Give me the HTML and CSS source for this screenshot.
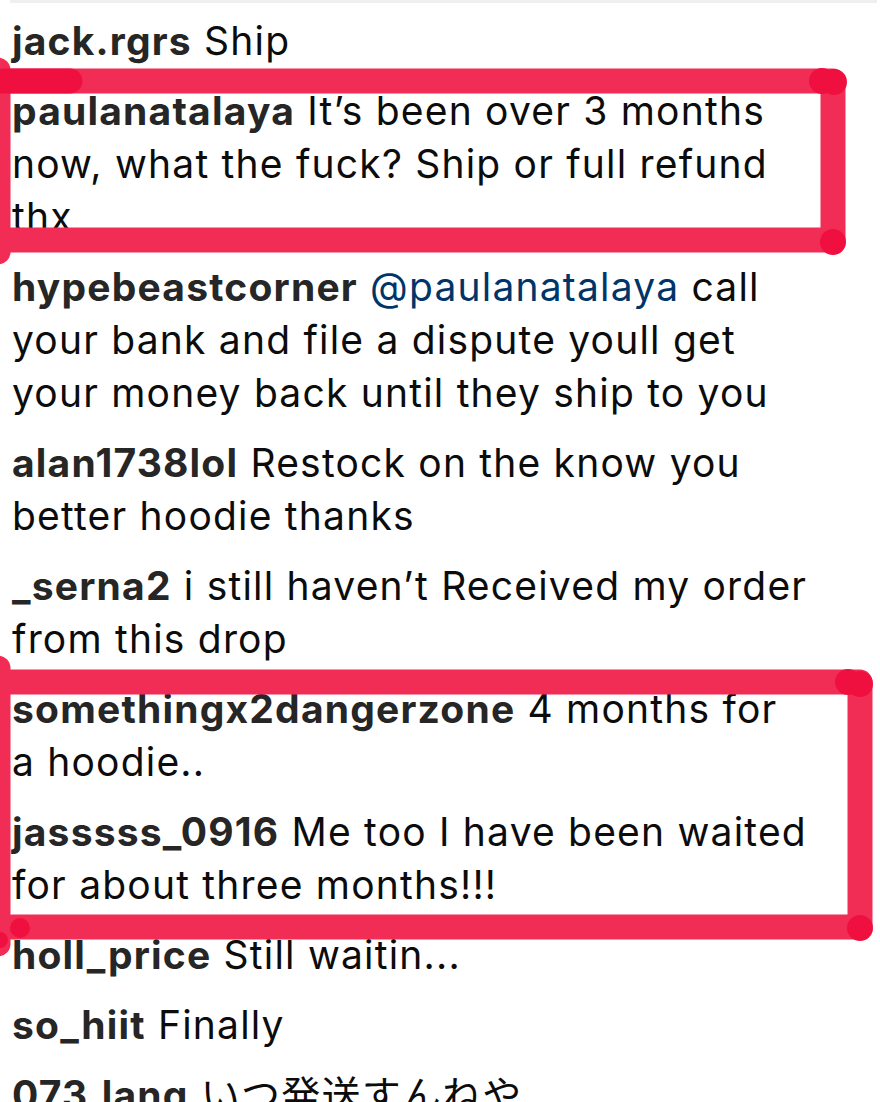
FILE: index.html
```html
<!DOCTYPE html>
<html lang="en">
<head>
    <meta charset="UTF-8">
    <meta name="viewport" content="width=device-width, initial-scale=1.0">
    <title>Comments</title>
    <link rel="stylesheet" href="styles.css">
</head>
<body>
    <div class="comments">
        <ul class="comment-list">
            <li class="comment"><span class="user">jack.rgrs</span> Ship</li>
            <li class="comment"><span class="user">paulanatalaya</span> It’s been over 3 months now, what the fuck? Ship or full refund thx</li>
            <li class="comment"><span class="user">hypebeastcorner</span> <a class="mention">@paulanatalaya</a> call your bank and file a dispute youll get your money back until they ship to you</li>
            <li class="comment"><span class="user">alan1738lol</span> Restock on the know you better hoodie thanks</li>
            <li class="comment"><span class="user">_serna2</span> i still haven’t Received my order from this drop</li>
            <li class="comment"><span class="user">somethingx2dangerzone</span> 4 months for a hoodie..</li>
            <li class="comment"><span class="user">jasssss_0916</span> Me too I have been waited for about three months!!!</li>
            <li class="comment"><span class="user">holl_price</span> Still waitin...</li>
            <li class="comment"><span class="user">so_hiit</span> Finally</li>
            <li class="comment"><span class="user">073.lang</span> いつ発送すんねや</li>
        </ul>

        <!-- marker annotations drawn over the list -->
        <svg class="marks" width="880" height="1102" viewBox="0 0 880 1102">
            <g class="stroke">
                <path d="M4 81 H833 V240 H0"/>
                <path d="M-2 70 V252"/>
                <path d="M4 682 H860 V927 H12"/>
                <path d="M-2 668 V944"/>
            </g>
            <g class="cap">
                <path d="M4 81 H70"/>
                <circle cx="822" cy="81" r="13"/>
                <circle cx="834" cy="82" r="13"/>
                <circle cx="833" cy="242" r="13"/>
                <circle cx="848" cy="682" r="13"/>
                <circle cx="860" cy="684" r="13"/>
                <circle cx="860" cy="928" r="13"/>
                <circle cx="20" cy="928" r="10"/>
                <circle cx="0" cy="940" r="8"/>
            </g>
        </svg>
    </div>
</body>
</html>
```

FILE: styles.css
```css
body {
    margin: 0;
    background-color: #fff;
    font-family: Inter, 'Noto Sans CJK JP', sans-serif;
    overflow: hidden;
}

.comments {
    position: relative;
    width: 880px;
    height: 1102px;
}

.comment-list {
    list-style: none;
    margin: 0 0 0 10px;
    padding: 11px 0 0 2px;
    width: 865px;
    border-top: 3px solid #efefef;
}

.comment {
    width: 797px;
    font-size: 39px;
    line-height: 53px;
    letter-spacing: 1.2px;
    color: #0c0c0c;
    margin-bottom: 17px;
}

.user {
    font-weight: 700;
    color: #262626;
}

.mention {
    color: #003569;
    text-decoration: none;
}

.marks {
    position: absolute;
    top: 0;
    left: 0;
    pointer-events: none;
}

.marks .stroke {
    fill: none;
    stroke: #f12d56;
    stroke-width: 25;
    stroke-linecap: round;
    stroke-linejoin: round;
}

.marks .cap {
    fill: #ef1040;
    stroke: #ef1040;
    stroke-width: 25;
    stroke-linecap: round;
}

.marks .cap circle {
    stroke: none;
}
```
